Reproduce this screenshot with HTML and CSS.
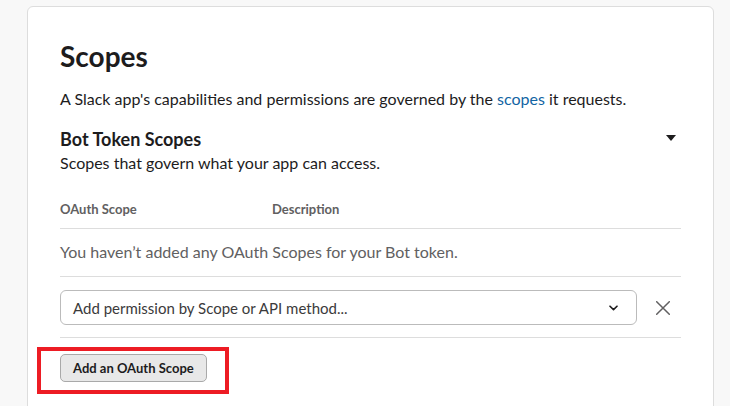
FILE: index.html
```html
<!DOCTYPE html>
<html lang="en">
<head>
<meta charset="utf-8">
<title>Scopes</title>
<link rel="stylesheet" href="styles.css">
</head>
<body>
<div class="page">
  <section class="card">
    <h1 class="title">Scopes</h1>
    <p class="intro">A Slack app's capabilities and permissions are governed by the <a class="link" href="#">scopes</a> it requests.</p>
    <div class="section-head">
      <h2 class="subtitle">Bot Token Scopes</h2>
      <svg class="caret" width="10" height="6" viewBox="0 0 10 6"><path d="M0 0h10L5 6z" fill="#1d1c1d"/></svg>
    </div>
    <p class="desc">Scopes that govern what your app can access.</p>
    <div class="table">
      <div class="thead">
        <span class="col-scope">OAuth Scope</span>
        <span class="col-desc">Description</span>
      </div>
      <div class="empty">You haven’t added any OAuth Scopes for your Bot token.</div>
      <div class="add-row">
        <div class="select">
          <span class="select-text">Add permission by Scope or API method...</span>
          <svg class="chevron" width="9" height="6" viewBox="0 0 9 6"><path d="M1 1.2L4.5 4.6 8 1.2" fill="none" stroke="#1d1c1d" stroke-width="1.6" stroke-linecap="round" stroke-linejoin="round"/></svg>
        </div>
        <svg class="close" width="14" height="14" viewBox="0 0 14 14"><path d="M0.7 0.7L13.3 13.3M13.3 0.7L0.7 13.3" stroke="#616061" stroke-width="1.5" stroke-linecap="round"/></svg>
      </div>
    </div>
    <div class="btn-wrap">
      <button class="btn">Add an OAuth Scope</button>
      <div class="highlight"></div>
    </div>
  </section>
</div>
</body>
</html>
```
FILE: styles.css
```css
html, body {
  margin: 0;
  padding: 0;
  background: #ffffff;
}
body {
  font-family: Lato, "Noto Sans", sans-serif;
  color: #1d1c1d;
}
.page {
  height: 406px;
  overflow: hidden;
  background: #f8f8f8;
  padding: 6px 16px 0 27px;
  box-sizing: border-box;
}
.card {
  background: #ffffff;
  border: 1px solid #dddddd;
  border-radius: 6px;
  padding: 31px 32px 40px 32px;
  min-height: 500px;
  box-sizing: border-box;
}
.title {
  margin: 0;
  font-size: 28px;
  line-height: 36px;
  font-weight: 700;
}
.intro {
  margin: 14px 0 0 0;
  font-size: 16px;
  line-height: 22px;
}
.link {
  color: #1264a3;
  text-decoration: none;
}
.section-head {
  margin-top: 17px;
  display: flex;
  align-items: center;
  justify-content: space-between;
}
.subtitle {
  margin: 0;
  font-size: 18px;
  line-height: 24px;
  font-weight: 700;
}
.caret {
  margin-right: 5px;
  margin-top: -2px;
}
.desc {
  margin: 1px 0 0 0;
  font-size: 16px;
  line-height: 22px;
}
.table {
  margin-top: 26px;
}
.thead {
  display: flex;
  font-size: 13px;
  line-height: 18px;
  font-weight: 700;
  color: #616061;
  padding-bottom: 10px;
  border-bottom: 1px solid #dddddd;
}
.col-scope {
  width: 212px;
}
.empty {
  padding: 12px 0 13px 0;
  font-size: 16px;
  line-height: 22px;
  color: #616061;
  border-bottom: 1px solid #dddddd;
}
.add-row {
  display: flex;
  align-items: center;
  padding: 13px 0 12px 0;
  border-bottom: 1px solid #dddddd;
}
.select {
  flex: 1;
  height: 35px;
  box-sizing: border-box;
  border: 1px solid #bbbbbb;
  border-radius: 6px;
  display: flex;
  align-items: center;
  justify-content: space-between;
  padding: 0 18px 0 12px;
}
.select-text {
  font-size: 15px;
  line-height: 22px;
  color: #3b3a3b;
}
.chevron {
  display: block;
}
.close {
  margin: 0 11px 0 19px;
  display: block;
}
.btn-wrap {
  position: relative;
  margin-top: 16px;
  display: inline-block;
}
.btn {
  font-family: Lato, "Noto Sans", sans-serif;
  font-size: 13px;
  font-weight: 700;
  color: #1d1c1d;
  background: #e8e8e8;
  border: 1px solid #a9a9a9;
  border-radius: 5px;
  height: 28px;
  box-sizing: border-box;
  padding: 0 12px 1px 12px;
  line-height: 24px;
  margin: 0;
  display: block;
}
.highlight {
  position: absolute;
  left: -23px;
  top: -7px;
  width: 192px;
  height: 47px;
  box-sizing: border-box;
  border: 4px solid #ed1c24;
}
```
